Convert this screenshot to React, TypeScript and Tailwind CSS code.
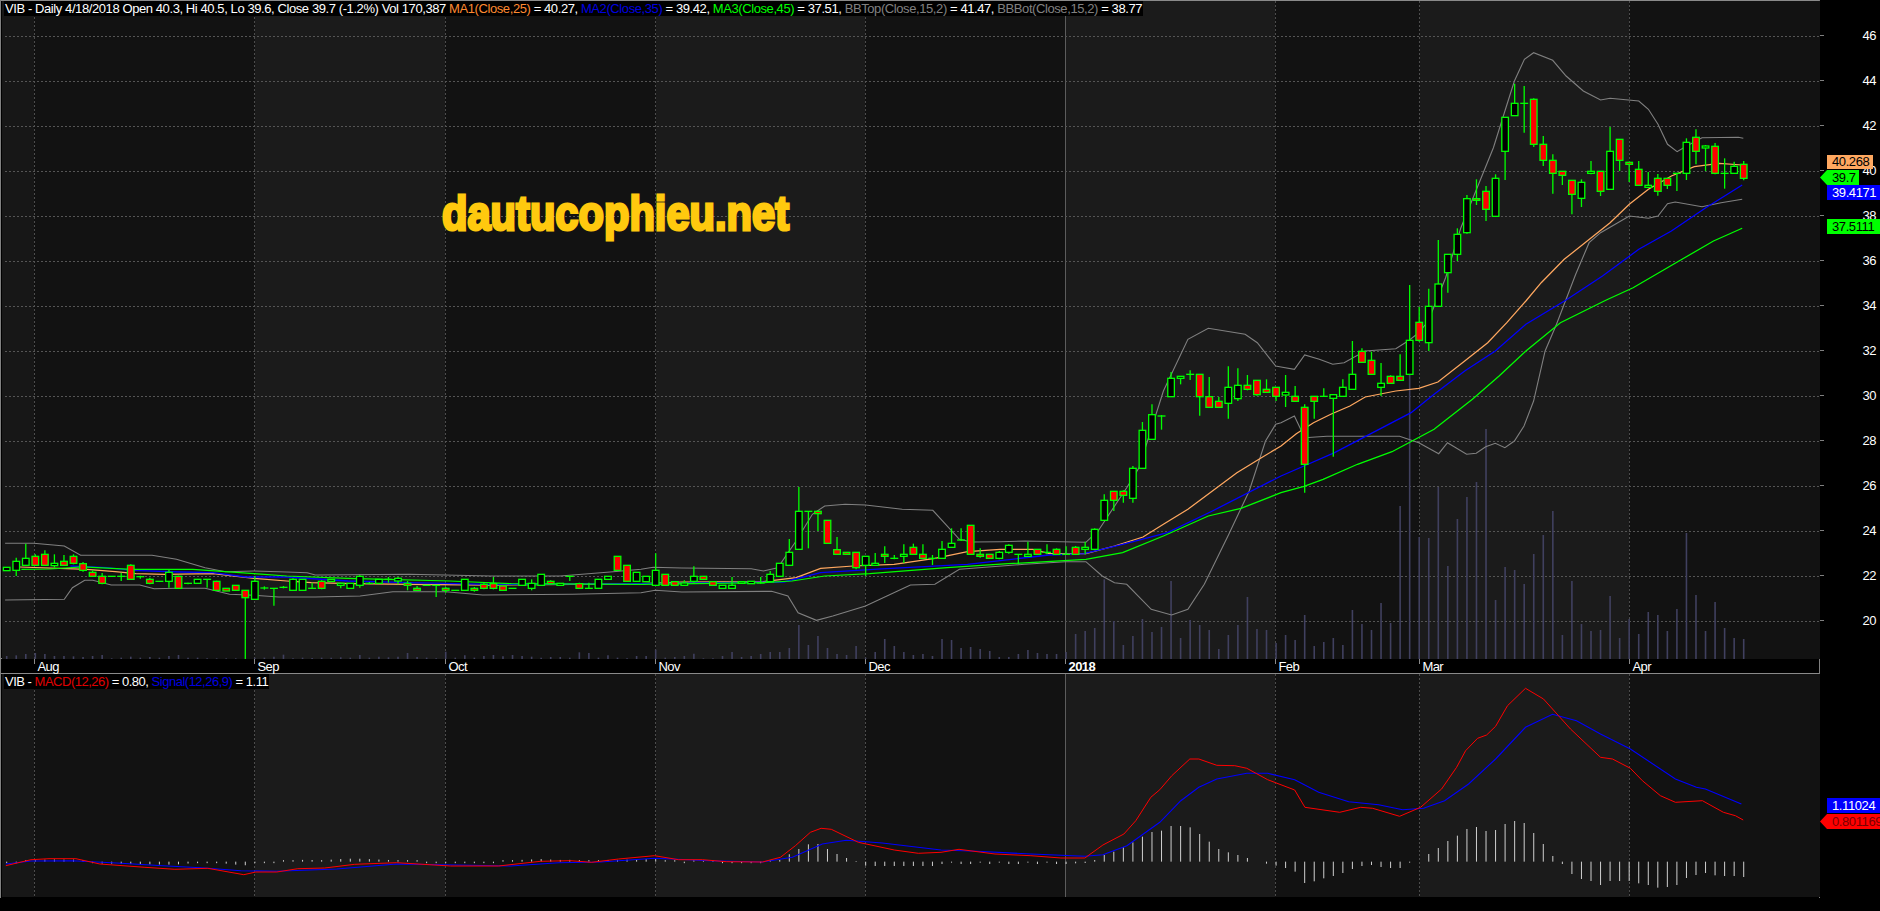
type Pt = [number, number];
type Bar = [number, number, number, number, number]; // body top, body bottom, wick top, wick bottom, red

const PANE_W = 1820;
const stepX = 9.544;
const barX = (i: number) => 5.7 + stepX * i;

// the crops the values were read from
const z4 = (u: number, v: number): Pt => [u / 2.45, 500 + v / 3];
const z5 = (u: number, v: number): Pt => [640 + u / 2.45, 300 + v / 3];
const z6 = (u: number, v: number): Pt => [1280 + u / 2.613, 300 + v / 3];
const z3 = (u: number, v: number): Pt => [1280 + u / 2.613, v / 3];
const z7 = (u: number, v: number): Pt => [u / 1.668, 650 + v / 3];
const z8 = (u: number, v: number): Pt => [940 + u / 1.668, 650 + v / 3];

const conv = (f: (u: number, v: number) => Pt, l: number[][]) => l.map(([u, v]) => f(u, v));
const toPath = (p: Pt[]) => p.map(([x, y], i) => `${i ? "L" : "M"}${x.toFixed(1)} ${y.toFixed(1)}`).join("");

const bars4: Bar[] = [
  [199,209,199,209,0],[181,208,170,225,0],[172,193,128,195,0],[166,193,160,195,1],[160,193,148,195,1],[187,194,160,200,0],
  [181,193,162,195,1],[166,187,160,190,1],[188,208,183,212,1],[214,226,208,228,1],[226,247,216,250,1],[226,226,226,226,0],
  [226,226,215,240,0],[193,235,190,237,1],[227,227,224,233,0],[235,247,230,250,1],[241,241,241,241,0],[214,241,205,260,0],
  [226,262,224,264,1],[247,247,245,250,0],[235,247,235,247,0],[235,235,235,260,0],[241,268,239,270,1],[262,270,262,270,1],
  [253,268,253,268,1],[268,290,268,474,1],[241,295,225,296,0],[261,261,256,266,0],[262,262,262,314,0],[259,259,255,262,0],
  [235,268,232,270,0],[235,268,235,268,0],[262,262,245,262,0],[241,262,238,265,1],[235,241,235,241,0],[247,253,245,262,0],
  [247,262,247,262,0],[226,253,222,260,0],[247,247,243,250,0],[235,247,235,247,0],[235,235,228,245,0],[232,240,228,250,0],
  [247,253,240,268,1],[262,268,255,270,1],[253,253,253,253,0],[253,253,253,288,0],[262,268,258,275,1],[268,268,268,268,0],
  [235,268,235,268,0],[262,268,258,272,1],[250,262,243,265,1],[248,262,228,265,1],[255,268,255,268,1],[262,262,262,262,0],
  [235,253,235,253,0],[247,262,235,268,0],[220,253,220,253,0],[241,248,238,250,1],[247,253,247,253,0],[226,226,226,240,0],
  [248,262,245,264,1],[262,262,245,262,0],[235,262,235,262,0],[226,235,226,235,0],[166,208,166,208,1],[193,241,193,241,1],
  [214,241,214,241,0],
];
const bars5: Bar[] = [
  [826,842,826,842,0],[808,853,757,855,0],[820,853,820,853,1],[842,853,840,855,1],[846,853,838,855,0],[826,841,796,845,0],
  [826,835,826,835,1],[842,853,842,853,1],[853,862,853,862,0],[853,862,828,862,0],[842,847,842,847,0],[841,848,841,848,0],
  [846,846,828,848,0],[820,842,810,843,0],[787,826,787,826,0],[754,793,714,795,0],[631,745,558,745,0],[631,631,631,742,0],
  [631,638,628,690,1],[658,727,658,727,1],[746,760,708,762,1],[754,760,754,760,1],[754,800,754,805,1],[766,793,766,825,0],
  [787,793,756,793,0],[760,766,736,786,1],[772,772,762,775,0],[760,766,730,786,0],[739,760,728,762,1],[760,772,730,774,1],
  [772,772,762,792,0],[745,772,720,772,0],[727,739,682,727,0],[717,717,682,720,0],[673,760,673,760,1],[760,766,742,770,1],
  [760,772,760,772,1],[754,772,750,775,0],[733,754,730,758,0],[760,760,760,790,0],[760,766,722,768,0],[745,760,745,760,1],
  [754,754,730,760,0],[745,760,742,762,1],[760,760,736,762,0],[739,760,735,762,1],[739,745,722,760,0],[685,745,682,747,0],
  [598,658,580,660,0],[571,598,571,630,1],[571,583,568,605,1],[502,592,495,605,0],[388,502,363,502,0],[341,415,310,415,0],
  [345,345,342,386,0],[232,287,213,287,0],[226,232,226,250,0],[220,220,208,237,0],[220,287,220,344,1],[287,319,228,319,1],
  [301,319,288,320,1],[259,307,196,353,0],[253,293,202,300,0],[253,265,222,268,1],[238,281,238,284,1],[265,274,235,276,1],
  [259,286,258,300,1],
];
const bars6: Bar[] = [
  [274,282,222,318,0],[286,301,255,303,1],[319,490,310,575,1],[286,301,286,353,1],[286,286,262,288,0],[281,292,281,467,0],
  [259,286,235,288,0],[220,265,120,265,0],[151,184,142,186,1],[178,220,152,220,1],[247,259,186,285,0],[226,247,223,248,1],
  [226,238,160,238,1],[118,220,-48,220,0],[64,118,18,122,1],[16,125,-37,150,0],[-51,16,-183,16,0],
];
const bars3: Bar[] = [
  [760,815,760,875,0],[700,760,682,780,0],[593,695,582,698,0],[593,598,535,612,1],[571,625,555,660,1],[532,646,520,646,0],
  [349,451,349,537,0],[307,344,248,344,0],[307,307,255,395,0],[295,430,292,438,1],[430,478,405,495,1],[478,517,460,578,1],
  [511,523,511,552,1],[538,580,538,640,1],[544,592,535,618,0],[511,517,480,520,0],[511,571,511,585,1],[451,565,378,565,0],
  [415,478,415,510,1],[484,490,482,543,1],[505,553,480,553,1],[553,559,513,562,0],[532,571,519,584,1],[532,553,532,564,1],
  [517,517,517,570,0],[424,517,412,537,0],[409,451,385,490,1],[435,441,432,510,0],[436,517,426,520,1],[517,517,472,563,0],
  [496,517,482,517,0],[490,532,480,538,1],
];
const scaleBars = (l: Bar[], off: number): Bar[] => l.map(([t, b, wt, wb, r]) => [off + t / 3, off + b / 3, off + wt / 3, off + wb / 3, r]);
const candles: Bar[] = [...scaleBars(bars4, 500), ...scaleBars(bars5, 300), ...scaleBars(bars6, 300), ...scaleBars(bars3, 0)];

const vol4 = [465,463,459,456,459,465,465,466,468,465,462,472,470,467,470,468,470,465,462,470,470,472,472,472,472,474,470,470,467,461,472,470,471,470,470,469,470,462,470,467,469,467,456,468,470,472,452,470,463,470,465,462,466,462,465,467,470,468,468,470,454,456,470,463,470,472,465];
const vol5 = [1065,1046,1070,1068,1065,1058,1072,1072,1065,1053,1068,1065,1059,1053,1053,1041,972,1032,1005,1041,1059,1062,1035,1070,1053,1014,1035,1053,1062,1059,1065,1014,1017,1041,1038,1044,1050,1068,1068,1059,1047,1056,1059,1059,1053,999,990,981,835,960,1032,1005,954,993,978,840,1011,957,972,987,1044,1002,972,888,984,987,1026];
const vol6 = [1002,1017,942,1035,1023,1011,1032,927,969,987,906,966,615,222,708,711,558,795,654,588,543,384,897,798,807,849,759,702,630,1002,840,969,990,987,885,1011,954,999,933,942,990,924,696,882,990,903,981,1011,1014];
const volumes = [...vol4.map((v) => 500 + v / 3), ...vol5.map((v) => 300 + v / 3), ...vol6.map((v) => 300 + v / 3)];

const bbTop = toPath([
  ...conv(z4, [[10,127],[80,127],[155,135],[195,163],[370,163],[430,175],[500,200],[550,212],[620,210],[700,213],[750,215],[770,222],[1000,220],[1200,225],[1370,225],[1500,212],[1568,205]]),
  ...conv(z5, [[30,799],[100,801],[270,803],[300,810],[335,800],[380,720],[420,640],[450,615],[500,610],[550,612],[640,625],[715,628],[780,715],[810,723],[880,722],[940,720],[1030,722],[1090,724],[1120,690],[1190,560],[1220,500],[1280,270],[1340,115],[1390,82],[1480,100],[1510,125],[1555,195],[1568,198]]),
  ...conv(z6, [[35,205],[62,162],[100,175],[135,190],[165,185],[220,150],[300,143],[335,118],[360,95],[385,60]]),
  ...conv(z3, [[430,830],[470,680],[555,440],[585,330],[610,240],[636,175],[660,155],[710,178],[745,225],[790,270],[835,297],[860,292],[935,300],[960,325],[985,370],[1010,430],[1035,452],[1060,435],[1100,410],[1195,409],[1208,412]]),
]);
const bbBot = toPath([
  ...conv(z4, [[10,297],[155,295],[175,260],[205,238],[225,238],[270,252],[340,252],[375,263],[430,262],[500,262],[560,280],[620,283],[680,288],[770,288],[880,285],[960,272],[1090,272],[1180,282],[1400,280],[1568,275]]),
  ...conv(z5, [[35,868],[100,873],[320,871],[360,885],[385,935],[430,958],[470,945],[550,915],[660,852],[720,850],[780,805],[940,790],[1040,782],[1090,782],[1130,825],[1160,845],[1190,850],[1250,925],[1300,942],[1340,925],[1380,850],[1440,700],[1490,570],[1530,420],[1555,370],[1568,365]]),
  ...conv(z6, [[35,345],[62,410],[120,406],[310,406],[360,425],[412,458],[435,425],[485,460],[510,457],[535,437],[560,427],[585,440],[610,420],[635,375],[660,300],[690,150],[720,70]]),
  ...conv(z3, [[745,895],[770,820],[805,725],[835,695],[880,665],[910,645],[960,652],[985,645],[1010,608],[1030,603],[1100,617],[1150,605],[1205,595]]),
]);
const ma1 = toPath([
  ...conv(z4, [[45,198],[160,203],[210,205],[280,212],[330,218],[400,220],[520,218],[620,232],[700,240],[760,245],[860,248],[1000,250],[1200,252],[1400,250],[1568,248]]),
  ...conv(z5, [[100,843],[300,842],[380,830],[440,802],[520,795],[620,790],[720,772],[800,752],[880,745],[960,745],[1000,758],[1090,758],[1160,735],[1230,708],[1280,670],[1340,625],[1400,570],[1460,515],[1520,470],[1568,435]]),
  ...conv(z6, [[40,398],[85,365],[130,340],[180,315],[220,288],[300,270],[360,262],[410,243],[480,180],[540,125],[590,65]]),
  ...conv(z3, [[640,900],[680,845],[740,775],[800,720],[860,665],[910,610],[960,565],[1020,525],[1080,497],[1145,487],[1205,492]]),
]);
const ma2 = toPath([
  ...conv(z4, [[170,195],[260,200],[320,208],[440,213],[520,215],[600,228],[700,228],[850,240],[1000,245],[1200,250],[1568,248]]),
  ...conv(z5, [[200,845],[350,843],[440,815],[600,803],[800,790],[1000,762],[1085,758],[1180,730],[1290,695],[1400,630],[1568,525]]),
  ...conv(z6, [[60,495],[140,455],[240,395],[340,335],[400,280],[480,210],[560,150],[640,70]]),
  ...conv(z3, [[745,897],[840,825],[935,745],[1020,690],[1110,620],[1205,552]]),
]);
const ma3 = toPath([
  ...conv(z4, [[50,205],[120,204],[200,198],[320,205],[470,205],[620,218],[700,225],[850,232],[1100,240],[1250,248],[1568,250]]),
  ...conv(z5, [[300,845],[370,840],[450,825],[560,818],[750,800],[900,788],[1090,775],[1180,755],[1280,705],[1390,645],[1470,622],[1568,575]]),
  ...conv(z6, [[60,556],[110,535],[200,490],[290,452],[400,385],[500,295],[570,225],[640,150],[730,65]]),
  ...conv(z3, [[850,897],[920,860],[1040,780],[1130,720],[1205,682]]),
]);

const macdPts: Pt[] = [
  ...conv(z7, [[8,650],[50,632],[80,629],[125,629],[165,645],[240,655],[290,661],[345,658],[405,677],[425,669],[460,669],[495,659],[540,657],[590,646],[660,641],[750,651],[830,651],[900,637],[950,635],[985,640],[1030,630],[1090,620],[1130,632],[1170,632],[1210,638],[1270,639],[1300,625],[1325,590],[1350,550],[1368,538],[1385,541],[1430,580],[1490,603],[1530,613],[1568,610]]),
  ...conv(z8, [[30,601],[90,615],[150,620],[200,627],[240,627],[270,588],[305,555],[325,515],[350,445],[365,422],[385,380],[415,330],[430,330],[460,349],[490,350],[510,358],[545,392],[590,423],[607,475],[665,490],[700,475],[720,478],[765,502],[800,475],[835,420],[860,355],[875,305],[895,268],[910,258],[925,232],[945,170],[975,118],[1005,150],[1050,240],[1100,325],[1120,330],[1150,358],[1170,395],[1200,440],[1225,460],[1270,455],[1305,490],[1325,500],[1338,513]]),
];
const signalPts: Pt[] = [
  ...conv(z7, [[8,645],[50,636],[120,635],[200,643],[270,650],[340,657],[400,665],[460,667],[560,660],[660,645],[760,648],[850,651],[930,641],[1000,639],[1090,628],[1120,630],[1180,635],[1270,639],[1320,625],[1370,585],[1410,574],[1470,582],[1568,603]]),
  ...conv(z8, [[60,607],[150,615],[240,622],[270,617],[310,590],[365,520],[400,455],[430,415],[460,390],[510,373],[545,373],[590,392],[630,430],[680,458],[730,467],[770,482],[805,478],[840,455],[880,405],[925,330],[975,235],[1020,196],[1060,215],[1100,255],[1150,300],[1225,390],[1260,415],[1275,420],[1335,465]]),
];

function yAt(p: Pt[], x: number) {
  for (let i = 1; i < p.length; i++) {
    if (x <= p[i][0]) {
      const t = (x - p[i - 1][0]) / (p[i][0] - p[i - 1][0]);
      return p[i - 1][1] + (p[i][1] - p[i - 1][1]) * t;
    }
  }
  return p[p.length - 1][1];
}

const histBase = 650 + 638 / 3;
const histLate: Record<number, number> = {};
[600,586,585,600,615,627,636,650,651,651,651,651,651,651,651].forEach((v, k) => (histLate[83 + k] = v));
[645,641,645,645,641,645,641,645,645,641,645,641,645,645,643].forEach((v, k) => (histLate[98 + k] = v));
[643,642,633,618,608,595,580,563,549,545,531,531,535,555,578,600,610,618,627,638,644,650,657,668,702,697,688,681,672,660,651,648,654,657,657,641,638,615,597,576,560,540,534,546,543,525,516,522,552,585,621,645,675,690,696,708,696,696,696,703,708,716,714,708,687,678,672,679,681,681,684]
  .forEach((v, k) => (histLate[112 + k] = v));

const histEnd = (i: number) => {
  if (histLate[i] !== undefined) return 650 + histLate[i] / 3;
  const d = yAt(macdPts, barX(i)) - yAt(signalPts, barX(i));
  return histBase + (Math.abs(d) < 1.5 ? (d < 0 ? -1.5 : 1.5) : d);
};

// bands and month lines, same for both panes
const months = [
  { i: 3, x: 33.5, label: "Aug" },
  { i: 26, x: 253.5, label: "Sep" },
  { i: 46, x: 444.5, label: "Oct" },
  { i: 68, x: 654.5, label: "Nov" },
  { i: 90, x: 864.5, label: "Dec" },
  { i: 111, x: 1064.5, label: "2018", year: true },
  { i: 133, x: 1274.5, label: "Feb" },
  { i: 148, x: 1418.5, label: "Mar" },
  { i: 170, x: 1628.5, label: "Apr" },
];
const edges = [1, ...months.map((m) => m.x), 1819];
const LIGHT = "#1b1b1b";
const DARK = "#121212";

function Bands({ top, bottom }: { top: number; bottom: number }) {
  return (
    <>
      {edges.slice(0, -1).map((x, i) => (
        <rect key={x} x={x} y={top} width={edges[i + 1] - x} height={bottom - top} fill={i === 0 ? "#171717" : i % 2 === 0 ? LIGHT : DARK} />
      ))}
      {months.map((m) => (
        <line
          key={m.label}
          x1={m.x}
          x2={m.x}
          y1={top}
          y2={bottom}
          stroke={m.year ? "#5c5c5c" : "#4c4c4c"}
          strokeDasharray={m.year ? undefined : "2 2"}
          shapeRendering="crispEdges"
        />
      ))}
    </>
  );
}

const priceY = (p: number) => 35.3 + (46 - p) * 22.5;
const priceTicks = [46, 44, 42, 40, 38, 36, 34, 32, 30, 28, 26, 24, 22, 20];

function PricePane() {
  return (
    <svg className="absolute inset-0" width={PANE_W - 1} height={658} viewBox="0 0 1819 658">
      <Bands top={0} bottom={658} />
      {priceTicks.map((p) => (
        <line key={p} x1={4} x2={1819} y1={priceY(p)} y2={priceY(p)} stroke="#555555" strokeDasharray="2 2" shapeRendering="crispEdges" />
      ))}
      {volumes.map((top, i) => (
        <line key={i} x1={barX(i)} x2={barX(i)} y1={top} y2={658} stroke="#40405f" strokeWidth={1.6} />
      ))}
      <path d={bbTop} fill="none" stroke="#808080" strokeWidth={1.1} />
      <path d={bbBot} fill="none" stroke="#808080" strokeWidth={1.1} />
      <path d={ma1} fill="none" stroke="#ffa860" strokeWidth={1.25} />
      <path d={ma2} fill="none" stroke="#0000ff" strokeWidth={1.3} />
      <path d={ma3} fill="none" stroke="#00ff00" strokeWidth={1.25} />
      {candles.map(([t, b, wt, wb, r], i) => {
        const x = barX(i);
        return (
          <g key={i}>
            <line x1={x} x2={x} y1={wt} y2={wb} stroke="#00ff00" strokeWidth={1.3} />
            {t === b ? (
              <line x1={x - 4} x2={x + 4} y1={t} y2={t} stroke="#00ff00" strokeWidth={1.3} />
            ) : (
              <rect x={x - 3.3} y={t} width={6.6} height={b - t} fill={r ? "#ff0000" : "#000000"} stroke="#00ff00" strokeWidth={1.3} />
            )}
          </g>
        );
      })}
    </svg>
  );
}

function MacdPane() {
  return (
    <svg className="absolute inset-0" width={PANE_W - 1} height={223} viewBox="0 675 1819 223">
      <Bands top={675} bottom={898} />
      {candles.map((_, i) => (
        <line key={i} x1={barX(i)} x2={barX(i)} y1={histBase} y2={histEnd(i)} stroke="#cfcfcf" strokeWidth={1} />
      ))}
      <path d={toPath(signalPts)} fill="none" stroke="#0000ff" strokeWidth={1.1} />
      <path d={toPath(macdPts)} fill="none" stroke="#ff0000" strokeWidth={1} />
    </svg>
  );
}

function DateBar() {
  return (
    <div className="relative h-[15px] shrink-0 border-b border-[#8a8a8a] bg-black">
      <svg className="absolute inset-0" width={PANE_W - 1} height={15}>
        {months.map((m) => (
          <g key={m.label}>
            <line x1={m.x} x2={m.x} y1={0} y2={5} stroke="#8a8a8a" shapeRendering="crispEdges" />
            <text x={m.x + 3} y={11.5} fill="#ffffff" fontSize={13} letterSpacing={-0.6} fontWeight={m.year ? 700 : 400}>
              {m.label}
            </text>
          </g>
        ))}
      </svg>
    </div>
  );
}

const headerParts = [
  { t: "VIB - Daily 4/18/2018 Open 40.3, Hi 40.5, Lo 39.6, Close 39.7 (-1.2%) Vol 170,387 ", c: "text-white" },
  { t: "MA1(Close,25)", c: "text-[#ff8a30]" },
  { t: " = 40.27, ", c: "text-white" },
  { t: "MA2(Close,35)", c: "text-[#0000e0]" },
  { t: " = 39.42, ", c: "text-white" },
  { t: "MA3(Close,45)", c: "text-[#00ff00]" },
  { t: " = 37.51, ", c: "text-white" },
  { t: "BBTop(Close,15,2)", c: "text-[#808080]" },
  { t: " = 41.47, ", c: "text-white" },
  { t: "BBBot(Close,15,2)", c: "text-[#808080]" },
  { t: " = 38.77", c: "text-white" },
];
const macdParts = [
  { t: "VIB - ", c: "text-white" },
  { t: "MACD(12,26)", c: "text-[#e00000]" },
  { t: " = 0.80, ", c: "text-white" },
  { t: "Signal(12,26,9)", c: "text-[#0000e0]" },
  { t: " = 1.11", c: "text-white" },
];

function Legend({ parts, tight }: { parts: { t: string; c: string }[]; tight: string }) {
  return (
    <div className={`absolute left-[3px] top-0 h-[15px] bg-black px-px text-[13px] leading-[15px] whitespace-pre ${tight}`}>
      {parts.map((p) => (
        <span key={p.t} className={p.c}>
          {p.t}
        </span>
      ))}
    </div>
  );
}

export default function App() {
  return (
    <div className="flex h-[911px] w-[1880px] overflow-hidden bg-black font-['Liberation_Sans',Arial,sans-serif]">
      <div className="flex h-[898px] w-[1820px] shrink-0 flex-col border-r border-l border-[#808080]">
        <div className="relative h-[659px] shrink-0 border-t border-b border-[#8a8a8a]">
          <PricePane />
          <Legend parts={headerParts} tight="tracking-[-0.41px]" />
          <div className="absolute left-[441px] top-[188px] origin-left scale-x-[0.85] text-[49px] leading-none font-bold whitespace-nowrap text-[#ffc90e] [-webkit-text-stroke:3px_#ffc90e]">
            dautucophieu.net
          </div>
        </div>
        <DateBar />
        <div className="relative flex-1">
          <MacdPane />
          <Legend parts={macdParts} tight="tracking-[-0.49px]" />
        </div>
      </div>
      <div className="relative flex-1 text-[13px] leading-[15px] tracking-[-0.4px]">
        <svg className="absolute inset-0" width={60} height={660}>
          {priceTicks.map((p) => (
            <g key={p}>
              <line x1={0} x2={4} y1={priceY(p)} y2={priceY(p)} stroke="#808080" shapeRendering="crispEdges" />
              <text x={42.5} y={priceY(p) + 4.5} fill="#ffffff" fontSize={13} letterSpacing={-0.5}>
                {p}
              </text>
            </g>
          ))}
        </svg>
        {/* value tags stacked over the axis */}
        <div className="relative flex flex-col items-start overflow-hidden pt-[155px]">
          <div className="ml-[7px] h-[14px] w-[46px] bg-[#ffa860] pl-[5px] leading-[14px] text-black">40.268</div>
          <div className="mt-px h-[15px] w-[39px] bg-[#00ff00] pl-[12px] text-black [clip-path:polygon(0_50%,7px_0,100%_0,100%_100%,7px_100%)]">39.7</div>
          <div className="ml-[7px] h-[15px] w-[53px] bg-[#0000ff] pl-[5px] text-white">39.4171</div>
          <div className="mt-[19px] ml-[7px] h-[15px] w-[53px] bg-[#00ff00] pl-[5px] text-black">37.5111</div>
          <div className="mt-[564px] ml-[7px] h-[15px] w-[53px] bg-[#0000ff] pl-[5px] text-white">1.11024</div>
          <div className="mt-px h-[15px] w-[60px] bg-[#ff0000] pl-[12px] whitespace-nowrap text-[#7a0000] [clip-path:polygon(0_50%,7px_0,100%_0,100%_100%,7px_100%)]">0.801169</div>
        </div>
      </div>
    </div>
  );
}
